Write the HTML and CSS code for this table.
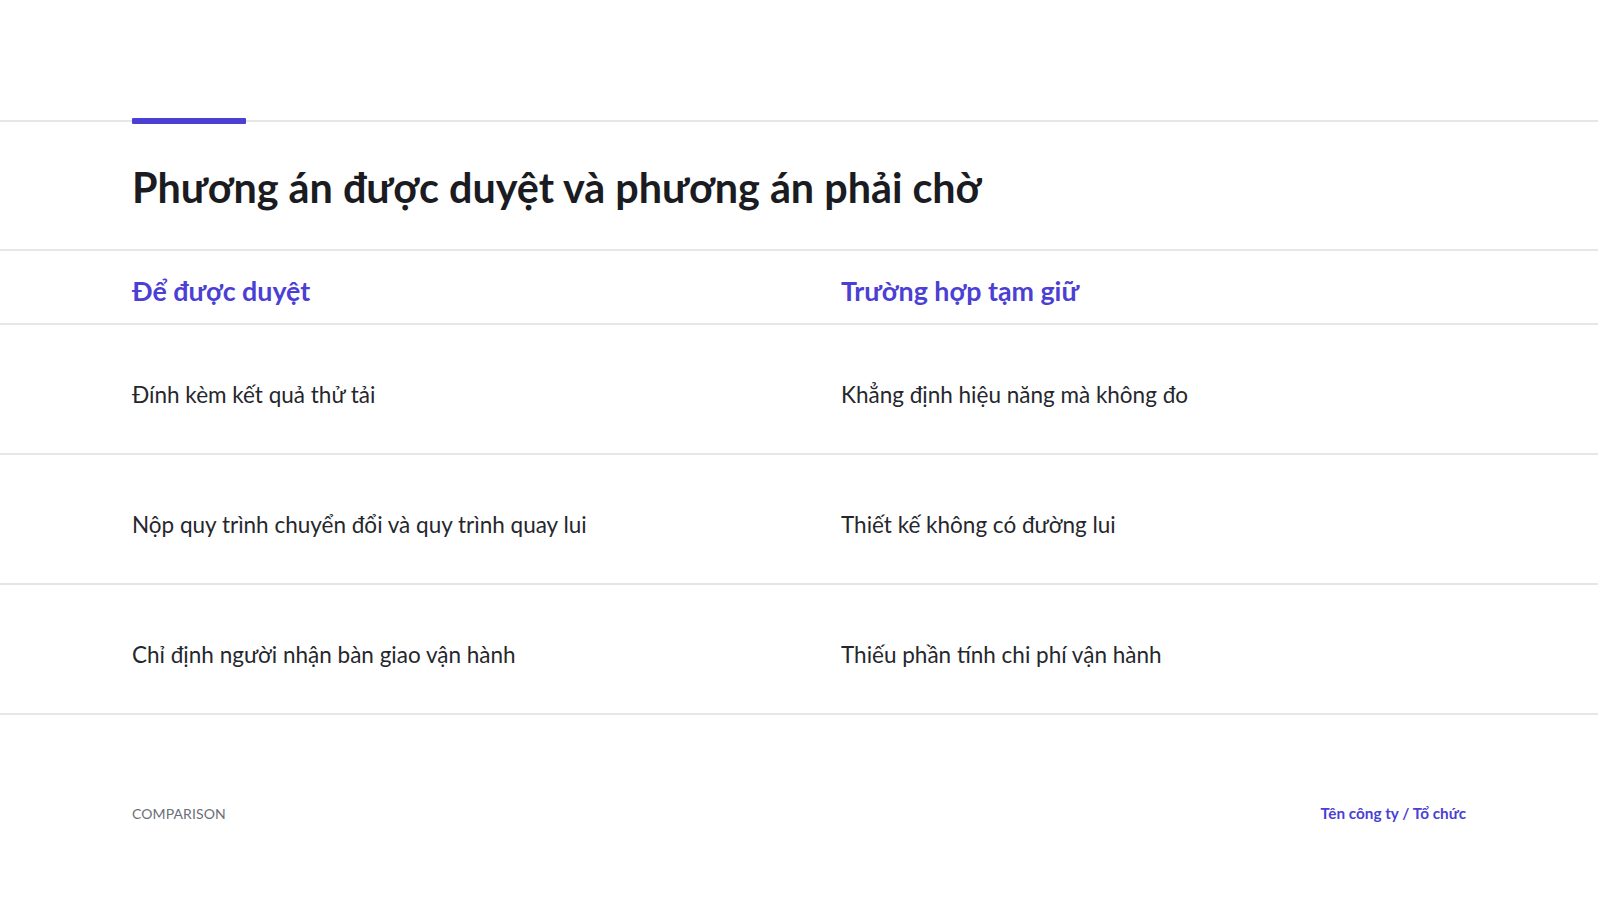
FILE: index.html
```
<!DOCTYPE html>
<html lang="vi">
<head>
<meta charset="utf-8">
<link rel="stylesheet" href="styles.css">
</head>
<body>
<div class="slide">
  <div class="top">
    <div class="accent"></div>
  </div>
  <h1 class="title">Phương án được duyệt và phương án phải chờ</h1>
  <div class="table">
    <div class="row head">
      <div class="cell">Để được duyệt</div>
      <div class="cell">Trường hợp tạm giữ</div>
    </div>
    <div class="row">
      <div class="cell">Đính kèm kết quả thử tải</div>
      <div class="cell">Khẳng định hiệu năng mà không đo</div>
    </div>
    <div class="row">
      <div class="cell">Nộp quy trình chuyển đổi và quy trình quay lui</div>
      <div class="cell">Thiết kế không có đường lui</div>
    </div>
    <div class="row">
      <div class="cell">Chỉ định người nhận bàn giao vận hành</div>
      <div class="cell">Thiếu phần tính chi phí vận hành</div>
    </div>
  </div>
  <div class="footer">
    <span class="label">COMPARISON</span>
    <span class="org">Tên công ty / Tổ chức</span>
  </div>
</div>
</body>
</html>
```
FILE: styles.css
```
* { box-sizing: border-box; }
html, body { margin: 0; padding: 0; background: #ffffff; }
body { font-family: Lato, "Noto Sans", sans-serif; color: #1d1e24; }
.slide { width: 1598px; height: 900px; overflow: hidden; }
.top {
  height: 122px;
  border-bottom: 2px solid #e6e6e8;
  position: relative;
}
.accent {
  position: absolute;
  left: 132px;
  bottom: -4px;
  width: 114px;
  height: 6px;
  background: #4b3fd4;
  border-radius: 1px;
}
.title {
  margin: 0;
  padding: 41px 0 0 132px;
  height: 129px;
  font-size: 41.3px;
  font-weight: 700;
  line-height: 48px;
  color: #1b1c22;
  border-bottom: 2px solid #e6e6e8;
}
.row {
  display: grid;
  grid-template-columns: 709px 1fr;
  padding-left: 132px;
  padding-top: 10px;
  border-bottom: 2px solid #e6e6e8;
  height: 130px;
  align-items: center;
  font-size: 22.5px;
  color: #26272d;
}
.row.head {
  height: 74px;
  font-size: 26.8px;
  font-weight: 700;
  color: #4b3fd4;
  padding-top: 8px;
}
.footer {
  display: flex;
  justify-content: space-between;
  align-items: center;
  padding: 0 132px;
  margin-top: 89px;
  font-size: 14px;
}
.label { color: #6b6e78; letter-spacing: 0.1px; }
.org { color: #4b3fd4; font-weight: 700; font-size: 15.3px; }
```
